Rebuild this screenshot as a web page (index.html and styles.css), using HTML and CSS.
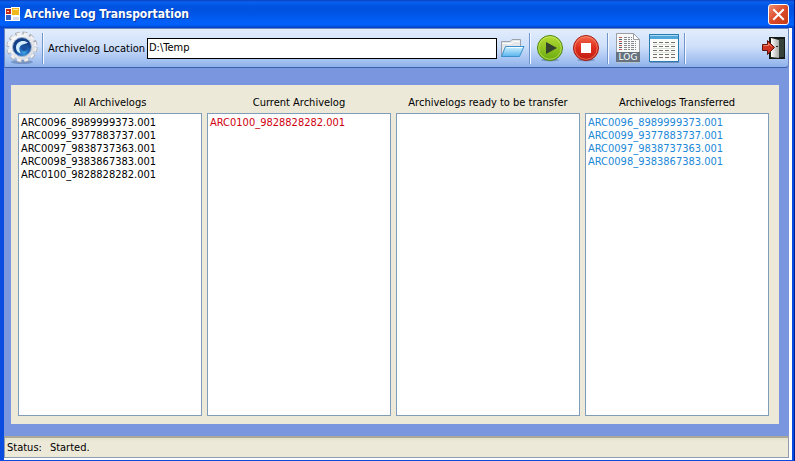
FILE: index.html
```html
<!DOCTYPE html>
<html lang="en">
<head>
<meta charset="utf-8">
<title>Archive Log Transportation</title>
<link rel="stylesheet" href="styles.css">
</head>
<body>
<div class="window">
  <header class="titlebar">
    <svg class="app-icon" viewBox="0 0 15 14" aria-hidden="true">
      <rect x="0" y="1" width="7" height="7" fill="#fff"/><rect x="1" y="2" width="5" height="5" fill="#c42a20"/>
      <rect x="6" y="0" width="9" height="9" fill="#fff"/><rect x="7" y="1" width="7" height="7" fill="#f0b81c"/>
      <rect x="0" y="8" width="7" height="6" fill="#fff"/><rect x="1" y="8" width="5" height="5" fill="#3261c8"/>
      <rect x="7" y="9" width="8" height="5" fill="#fff"/><rect x="8" y="10" width="6" height="3" fill="#d9dce8"/>
      <path d="M2 4.500h2M8 2.500h5" stroke="#ffe9a0"/>
    </svg>
    <h1 class="title">Archive Log Transportation</h1>
    <button class="close" type="button" aria-label="Close">
      <svg viewBox="0 0 19 19"><path d="M5 5l9 9M14 5l-9 9" stroke="#fff" stroke-width="2" stroke-linecap="square"/></svg>
    </button>
  </header>
  <div class="frame">
    <div class="toolbar">
      <button class="tool gear" type="button" aria-label="Settings">
        <svg viewBox="0 0 32 34">
          <defs>
            <linearGradient id="gearFill" x2="1" y2="1"><stop offset="0" stop-color="#fff"/><stop offset="1" stop-color="#d3d5da"/></linearGradient>
            <radialGradient id="orb" cx=".6" cy=".8"><stop offset="0" stop-color="#3fa4e4"/><stop offset=".5" stop-color="#1d66b8"/><stop offset="1" stop-color="#153f86"/></radialGradient>
          </defs>
          <ellipse cx="16" cy="31" rx="11" ry="2" fill="#47659a" opacity=".45"/>
          <circle cx="16" cy="16" r="13.500" fill="none" stroke="#a9a9ae" stroke-width="4" stroke-dasharray="4.700 2.370"/>
          <circle cx="16" cy="16" r="13.300" fill="none" stroke="#f1f1f2" stroke-width="3" stroke-dasharray="4 3.070" stroke-dashoffset="-.35"/>
          <circle cx="16" cy="16" r="12.600" fill="url(#gearFill)"/>
          <circle cx="16" cy="16" r="9.500" fill="url(#orb)" stroke="#9fb6d6"/>
          <path d="M22 11.500C17 8 10 10.500 10 16.500c0 3 2 5.500 5 6C12.500 19 13 15.300 16 13.800c2-1 4.500-.8 6-2.300z" fill="#d3efff"/>
          <path d="M15.500 17c0-2.200 3.500-3.200 5.200-1.200 1.200 1.700-.2 4.500-3 4.200-1.300-.2-2.200-1.500-2.200-3z" fill="#1a509c"/>
        </svg>
      </button>
      <span class="separator"></span>
      <label class="location-label" for="location">Archivelog Location</label>
      <input class="location" id="location" type="text" value="D:\Temp">
      <button class="tool folder" type="button" aria-label="Browse">
        <svg viewBox="0 0 25 20">
          <defs><linearGradient id="folderFill" x2="0" y2="1"><stop offset="0" stop-color="#d5f3ff"/><stop offset="1" stop-color="#58b5ed"/></linearGradient></defs>
          <path d="M1.500 18V3.500H10L12 1.500h8.500V8L17 18z" fill="#e4e6ea" stroke="#9aa0aa"/>
          <path d="M2.500 5.500h9l2-2h6" fill="none" stroke="#fff"/>
          <path d="M5.500 8.500h18.500L19.500 18.500H1.500z" fill="url(#folderFill)" stroke="#3b91cc"/>
          <path d="M6.500 9.500h16" stroke="#f2fcff"/>
        </svg>
      </button>
      <span class="separator"></span>
      <button class="tool round" type="button" aria-label="Start">
        <svg viewBox="0 0 28 28">
          <defs><linearGradient id="green" x2="0" y2="1"><stop offset="0" stop-color="#b5db35"/><stop offset="1" stop-color="#6aaa10"/></linearGradient></defs>
          <ellipse cx="14" cy="26" rx="9" ry="1.500" fill="#375d7c" opacity=".4"/>
          <circle cx="14" cy="14" r="12.500" fill="url(#green)" stroke="#4b880c"/>
          <circle cx="14" cy="14" r="11.300" fill="none" stroke="#d8ee74" opacity=".6"/>
          <path d="M10 8v12l11-6z" fill="#34412d"/>
        </svg>
      </button>
      <button class="tool round" type="button" aria-label="Stop">
        <svg viewBox="0 0 28 28">
          <defs><linearGradient id="red" x2="0" y2="1"><stop offset="0" stop-color="#f36a4b"/><stop offset=".5" stop-color="#df2c1c"/><stop offset="1" stop-color="#bd1c12"/></linearGradient></defs>
          <ellipse cx="14" cy="26" rx="9" ry="1.500" fill="#375d7c" opacity=".4"/>
          <circle cx="14" cy="14" r="12.500" fill="url(#red)" stroke="#a51c12"/>
          <circle cx="14" cy="14" r="11.300" fill="none" stroke="#ff9d7f" opacity=".6"/>
          <rect x="9" y="9" width="10" height="10" fill="#fff"/>
        </svg>
      </button>
      <span class="separator"></span>
      <button class="tool log" type="button" aria-label="Log">
        <svg viewBox="0 0 26 32">
          <path d="M1.500 21V1.500h17l6 6V21z" fill="#f7f8f8" stroke="#9b9fa4"/>
          <path d="M18.500 1.500v6h6z" fill="#fff" stroke="#9b9fa4"/>
          <path d="M9 5.500h8M9 7.500h8M9 9.500h12M9 11.500h12M9 13.500h12M9 15.500h12M9 17.500h12" stroke="#85898e" stroke-dasharray="3 1 2 1"/>
          <path d="M4 5.500h3M4 9.500h3M4 13.500h3M4 17.500h3" stroke="#c25555"/>
          <path d="M4 7.500h3M4 11.500h3M4 15.500h3" stroke="#4e5f78"/>
          <path d="M1 20h24v10H1z" fill="#66737f"/>
          <path d="M2 30.500h22" stroke="#b7c2d0"/>
          <text class="log-text" x="13" y="28" text-anchor="middle">LOG</text>
        </svg>
      </button>
      <button class="tool table" type="button" aria-label="Table">
        <svg viewBox="0 0 32 30">
          <rect x="1.500" y="1.500" width="29" height="27" fill="#fbfcfa" stroke="#277bb1"/>
          <path d="M2 2h28v4H2z" fill="#4fa5d8"/><path d="M2 2.500h28" stroke="#a9dcf4"/>
          <path d="M5 9.500h22M5 13.500h22M5 17.500h22M5 21.500h22M5 24.500h22" stroke="#75716a" stroke-dasharray="4 2"/>
          <path d="M5 11.500h22M5 15.500h22M5 19.500h22" stroke="#dbe2dc"/>
          <path d="M2 29.500h29" stroke="#6f8fc1"/>
        </svg>
      </button>
      <span class="separator"></span>
      <button class="tool exit" type="button" aria-label="Exit">
        <svg viewBox="0 0 24 24">
          <defs><linearGradient id="door"><stop offset="0" stop-color="#fff"/><stop offset="1" stop-color="#a9aaa8"/></linearGradient></defs>
          <path d="M8 1h16v22H8z" fill="#161b17"/>
          <path d="M18 3h5v18h-5z" fill="#37423b"/>
          <path d="M10 2l8 2v18l-8-1z" fill="url(#door)"/>
          <path d="M15 10.500h2" stroke="#222"/>
          <path d="M1.500 8.500h5V4.500l7 7-7 7v-4h-5z" fill="#cf3322" stroke="#5c130d"/>
          <path d="M2.500 9.500h5V7.500l3 3" fill="none" stroke="#f0876d"/>
        </svg>
      </button>
    </div>
    <main class="workspace">
      <div class="panel">
        <section class="column">
          <h2 class="heading">All Archivelogs</h2>
          <ul class="list">
            <li>ARC0096_8989999373.001</li>
            <li>ARC0099_9377883737.001</li>
            <li>ARC0097_9838737363.001</li>
            <li>ARC0098_9383867383.001</li>
            <li>ARC0100_9828828282.001</li>
          </ul>
        </section>
        <section class="column">
          <h2 class="heading">Current Archivelog</h2>
          <ul class="list current">
            <li>ARC0100_9828828282.001</li>
          </ul>
        </section>
        <section class="column">
          <h2 class="heading">Archivelogs ready to be transfer</h2>
          <ul class="list"></ul>
        </section>
        <section class="column">
          <h2 class="heading">Archivelogs Transferred</h2>
          <ul class="list transferred">
            <li>ARC0096_8989999373.001</li>
            <li>ARC0099_9377883737.001</li>
            <li>ARC0097_9838737363.001</li>
            <li>ARC0098_9383867383.001</li>
          </ul>
        </section>
      </div>
    </main>
    <footer class="status"><span>Status:</span><span>Started.</span></footer>
  </div>
</div>
</body>
</html>
```
FILE: styles.css
```css
* {
  box-sizing: border-box;
}

body {
  margin: 0;
  font: 11px/13px "DejaVu Sans Condensed", "DejaVu Sans", sans-serif;
  color: #000;
}

.window {
  display: flex;
  flex-direction: column;
  min-height: 100vh;
  padding: 0 2px 1px 4px;
  background: #0a4be0;
  border-right: 1px solid #001c96;
}

.titlebar {
  display: flex;
  align-items: center;
  gap: 4px;
  height: 28px;
  margin: 0 -2px 0 -4px;
  padding: 0 5px;
  background: linear-gradient(#0a3fc0 0, #0a62ee 2px, #0053e0 6px, #0052e2 12px, #0061fa 22px, #0060f8 25px, #003fc4 28px);
}

.app-icon {
  width: 15px;
  height: 14px;
}

.title {
  flex: 1;
  margin: 0;
  font: bold 12px/16px "DejaVu Sans Condensed", "DejaVu Sans", sans-serif;
  color: #fff;
  text-shadow: 1px 1px #06379f;
}

.close {
  width: 21px;
  height: 21px;
  padding: 0;
  border: 1px solid #fff;
  border-radius: 3px;
  background: linear-gradient(135deg, #ee8d70, #dc4a28 50%, #c43a18);
}

.close svg,
.tool svg {
  display: block;
  width: 100%;
  height: 100%;
}

.frame {
  flex: 1;
  display: flex;
  flex-direction: column;
  border: solid #fff;
  border-width: 0 3px 2px 0;
  background: #7a96df;
}

.toolbar {
  display: flex;
  align-items: center;
  height: 40px;
  padding: 0 3px 0 1px;
  border: 1px solid #6a86c0;
  border-bottom: 1px solid #3b61a8;
  border-radius: 0 0 4px 0;
  background: linear-gradient(#e2edfd, #cfe0fa 45%, #8fb2ec);
}

.tool {
  flex: none;
  padding: 0;
  border: 0;
  background: none;
}

.gear {
  width: 32px;
  height: 34px;
}

.separator {
  flex: none;
  width: 2px;
  height: 31px;
  margin: 0 4px;
  border-left: 1px solid #7294cc;
  border-right: 1px solid #f4f8ff;
}

.location-label {
  flex: none;
  width: 99px;
  white-space: nowrap;
}

.location {
  flex: 0 1 350px;
  min-width: 60px;
  height: 21px;
  padding: 0 1px 2px;
  border: 1px solid #000;
  border-radius: 0;
  background: #fff;
  font: inherit;
  color: inherit;
}

.folder {
  width: 25px;
  height: 20px;
  margin: 0 0 0 3px;
}

.round {
  width: 28px;
  height: 28px;
  margin: 0 0 0 1px;
}

.round + .round {
  margin: 0 3px 0 8px;
}

.log {
  width: 26px;
  height: 32px;
  margin: 0 0 0 2px;
}

.log-text {
  font: 9px "DejaVu Sans", sans-serif;
  fill: #fff;
}

.table {
  width: 32px;
  height: 30px;
  margin: 0 0 0 7px;
}

.exit {
  width: 24px;
  height: 24px;
  margin: 0 0 0 auto;
}

.workspace {
  flex: 1;
  display: flex;
  padding: 17px 10px 12px 7px;
}

.panel {
  flex: 1;
  display: grid;
  grid-template-columns: repeat(4, minmax(0, 1fr));
  gap: 5px;
  padding: 11px 10px 8px 7px;
  background: #ece9d8;
}

.column {
  display: flex;
  flex-direction: column;
  gap: 4px;
}

.heading {
  margin: 0;
  font: inherit;
  text-align: center;
  white-space: nowrap;
}

.list {
  flex: 1;
  margin: 0;
  padding: 2px;
  border: 1px solid #7f9db9;
  background: #fff;
  list-style: none;
}

.current {
  color: #d00010;
}

.transferred {
  color: #2088d8;
}

.status {
  display: flex;
  align-items: center;
  gap: 8px;
  height: 22px;
  padding: 0 2px;
  border: 1px solid #8d9cb0;
  border-top: 2px solid #aca899;
  background: linear-gradient(#e4e1cc, #ece9d8 4px);
}
```
